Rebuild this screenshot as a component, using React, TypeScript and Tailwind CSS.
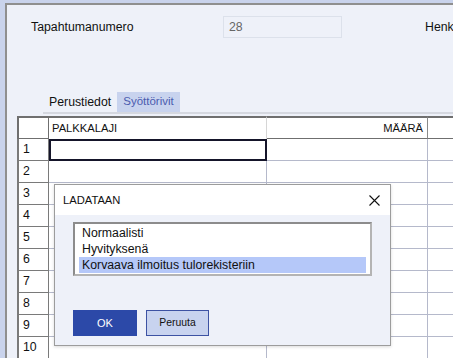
import React from 'react';

const font = { fontFamily: '"Liberation Sans", Arial, sans-serif' };

const rows = [1, 2, 3, 4, 5, 6, 7, 8, 9, 10];

const GridRow: React.FC<{ n: number }> = ({ n }) => (
  <div className="flex h-[22px] shrink-0">
    <div className="w-[32px] h-full border-l-2 border-r border-b border-[#7a7a7a] bg-white pl-[4px] flex items-center text-[12.3px] text-[#111]">
      {n}
    </div>
    {n === 1 ? (
      <div className="w-[218px] h-full border-2 border-[#15152a] bg-white" />
    ) : (
      <div className="w-[218px] h-full border-r border-b border-[#b5b9cb] bg-white" />
    )}
    <div className="w-[161px] h-full border-r border-b border-[#b5b9cb] bg-white" />
    <div className="flex-1 h-full border-b border-[#b5b9cb] bg-white" />
  </div>
);

const LoadDialog: React.FC = () => {
  const options = ['Normaalisti', 'Hyvityksenä', 'Korvaava ilmoitus tulorekisteriin'];
  return (
    <div className="absolute left-[54px] top-[184px] w-[337px] h-[162px] border border-[#9c9c9c] bg-[#eef1f9] flex flex-col shadow-[0_1px_3px_rgba(0,0,0,0.15)]">
      <div className="h-[30px] shrink-0 bg-white flex items-center justify-between pl-[8px] pr-[10px]">
        <span className="text-[11.2px] text-[#111]">LADATAAN</span>
        <svg width="11" height="11" viewBox="0 0 11 11">
          <path d="M0.5 0.5 L10.5 10.5 M10.5 0.5 L0.5 10.5" stroke="#111" strokeWidth="1.1" fill="none" />
        </svg>
      </div>
      <div className="flex-1 flex flex-col pl-[18px] pt-[7px]">
        <div className="w-[299px] h-[54px] border-2 border-t-[#8c8c8c] border-l-[#8c8c8c] border-r-[#b4b4b4] border-b-[#b4b4b4] bg-white pt-[1px] px-[4px]">
          {options.map((o, i) => (
            <div
              key={o}
              className={
                'h-[16px] flex items-center pl-[3px] text-[12.3px] text-[#111] ' +
                (i === 2 ? 'bg-[#b5c8f9]' : '')
              }
            >
              {o}
            </div>
          ))}
        </div>
        <div className="mt-[34px] flex gap-[9px]">
          <button className="w-[64px] h-[26px] bg-[#2c49a8] text-white text-[11px]">OK</button>
          <button className="w-[63px] h-[26px] bg-[#c8d3ef] border border-[#3d52a3] text-[#111] text-[10.4px]">
            Peruuta
          </button>
        </div>
      </div>
    </div>
  );
};

const App: React.FC = () => {
  return (
    <div
      className="w-[453px] h-[358px] overflow-hidden relative bg-[#c9d3ec] pt-[3px] pl-[5px] flex"
      style={font}
    >
      <div className="flex-1 h-[400px] border-l-2 border-t-2 border-[#8f8f8f] bg-[#eef1f9] flex flex-col">
        <div className="mt-[11px] h-[22px] flex items-center shrink-0">
          <span className="ml-[24px] w-[192px] text-[12.3px] text-[#111]">Tapahtumanumero</span>
          <div className="w-[119px] h-[22px] border border-[#dce1eb] bg-[#eef1f9] flex items-center pl-[5px] text-[12.3px] text-[#666]">
            28
          </div>
          <span className="ml-[83px] text-[12.3px] text-[#111] whitespace-nowrap">Henkilö</span>
        </div>

        <div className="mt-[54px] ml-[36px] h-[22px] flex border-b-2 border-[#d5d8e0] shrink-0">
          <div className="h-[20px] px-[6px] flex items-center text-[12.3px] text-[#111]">Perustiedot</div>
          <div className="h-[20px] px-[6px] flex items-center bg-[#c8d3ee] text-[11.5px] text-[#4b5bae]">Syöttörivit</div>
        </div>

        <div className="mt-[2px] ml-[10px] flex flex-col">
          <div className="flex h-[23px] shrink-0">
            <div className="w-[32px] h-full border-l-2 border-t-2 border-r border-b border-[#6f6f6f] bg-white" />
            <div className="w-[218px] h-full border-t-2 border-t-[#6f6f6f] border-r border-r-[#d6d6d6] bg-white pl-[3px] flex items-center text-[11.2px] text-[#111]">
              PALKKALAJI
            </div>
            <div className="w-[161px] h-full border-t-2 border-t-[#6f6f6f] border-r border-r-[#8a8a8a] border-b border-b-[#6f6f6f] bg-white pr-[4px] flex items-center justify-end text-[11.2px] text-[#111]">
              MÄÄRÄ
            </div>
            <div className="flex-1 h-full border-t-2 border-t-[#6f6f6f] border-b border-b-[#6f6f6f] bg-white" />
          </div>
          {rows.map((n) => (
            <GridRow key={n} n={n} />
          ))}
        </div>
      </div>

      <LoadDialog />
    </div>
  );
};

export default App;
